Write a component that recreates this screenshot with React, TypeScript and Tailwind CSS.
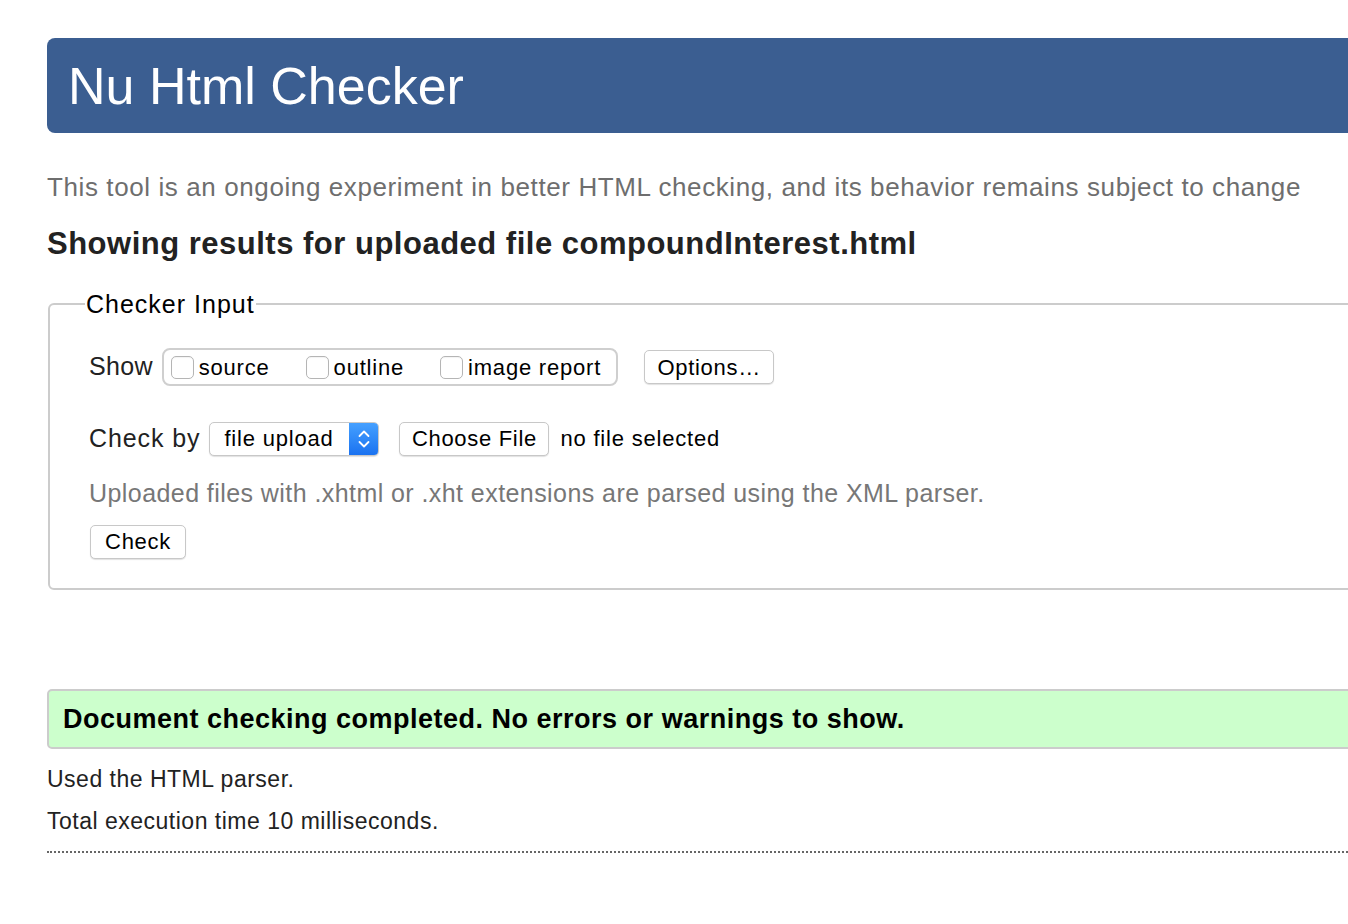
function Box({ label }: { label: string }) {
  return (
    <label className="flex items-center">
      <span className="h-[23px] w-[23px] rounded-[5px] border border-[#b5b5b5] bg-white shadow-[inset_0_1px_1px_rgba(0,0,0,0.05)]" />
      <span className="ml-[5px]">{label}</span>
    </label>
  );
}

function MacButton({ children, className = "" }: { children: React.ReactNode; className?: string }) {
  return (
    <button
      className={
        "flex h-[34px] items-center justify-center rounded-[5px] border border-[#c8c8c8] bg-white text-[22px] tracking-[0.7px] text-black shadow-[0_1px_1px_rgba(0,0,0,0.12)] " +
        className
      }
    >
      {children}
    </button>
  );
}

export default function App() {
  return (
    <div className="min-h-screen overflow-hidden bg-white font-['Liberation_Sans',Arial,sans-serif] text-[#222]">
      <div className="ml-[47px] w-[1400px] pt-[38px]">
        <header className="flex h-[95px] items-center rounded-l-[8px] bg-[#3b5e91] pl-[21px]">
          <h1 className="text-[52px] leading-none text-white">Nu Html Checker</h1>
        </header>

        <p className="mt-[40px] text-[26px] leading-[28px] tracking-[0.6px] text-[#6e6e6e]">
          This tool is an ongoing experiment in better HTML checking, and its behavior remains subject to change
        </p>

        <h2 className="mt-[26px] text-[31px] font-bold leading-[34px] tracking-[0.5px] text-[#222]">
          Showing results for uploaded file compoundInterest.html
        </h2>

        <fieldset className="ml-px mt-[29px] h-[300px] rounded-l-[6px] border-2 border-[#cccccc] pl-[40px] pr-0">
          <legend className="-ml-[5px] px-[1px] text-[25px] leading-[28px] tracking-[1px] text-black">Checker Input</legend>

          <div className="mt-[30px] flex items-center text-[22px] tracking-[0.8px] text-black">
            <span className="-ml-px text-[25px] tracking-[0.3px] text-[#222]">Show</span>
            <div className="ml-[9px] flex h-[38px] items-center rounded-[8px] border-2 border-[#cfcfcf] pl-[7px] pr-[15px]">
              <Box label="source" />
              <span className="w-[36px]" />
              <Box label="outline" />
              <span className="w-[36px]" />
              <Box label="image report" />
            </div>
            <MacButton className="ml-[26px] w-[130px]">Options…</MacButton>
          </div>

          <div className="mt-[34px] flex items-center text-[22px] tracking-[0.8px] text-black">
            <span className="-ml-px text-[25px] tracking-[0.9px] text-[#222]">Check by</span>
            <div className="ml-[9px] flex h-[34px] w-[170px] overflow-hidden rounded-[5px] border border-[#c8c8c8] bg-white shadow-[0_1px_1px_rgba(0,0,0,0.12)]">
              <span className="flex flex-1 items-center pl-[14px]">file upload</span>
              <span className="flex w-[29px] shrink-0 items-center justify-center bg-gradient-to-b from-[#45a0ff] to-[#1a72f0]">
                <svg width="12" height="22" viewBox="0 0 12 22" fill="none" stroke="white" strokeWidth="1.8" strokeLinecap="round" strokeLinejoin="round">
                  <path d="M1.5 8 L6 3.5 L10.5 8" />
                  <path d="M1.5 14 L6 18.5 L10.5 14" />
                </svg>
              </span>
            </div>
            <MacButton className="ml-[20px] w-[150px]">Choose File</MacButton>
            <span className="ml-[11px]">no file selected</span>
          </div>

          <p className="-ml-px mt-[21px] text-[25px] leading-[28px] tracking-[0.43px] text-[#777]">
            Uploaded files with .xhtml or .xht extensions are parsed using the XML parser.
          </p>

          <MacButton className="mt-[18px] w-[96px]">Check</MacButton>
        </fieldset>

        <div className="mt-[99px] flex h-[60px] items-center rounded-l-[5px] border-2 border-[#cccccc] bg-[#ccffcc] pl-[14px]">
          <span className="text-[27px] font-bold tracking-[0.5px] text-black">
            Document checking completed. No errors or warnings to show.
          </span>
        </div>

        <p className="mt-[16px] text-[23px] leading-[28px] tracking-[0.5px] text-[#222]">Used the HTML parser.</p>
        <p className="mt-[14px] text-[23px] leading-[28px] tracking-[0.5px] text-[#222]">Total execution time 10 milliseconds.</p>

        <div className="mt-[16px] border-t-2 border-dotted border-[#666]" />
      </div>
    </div>
  );
}
